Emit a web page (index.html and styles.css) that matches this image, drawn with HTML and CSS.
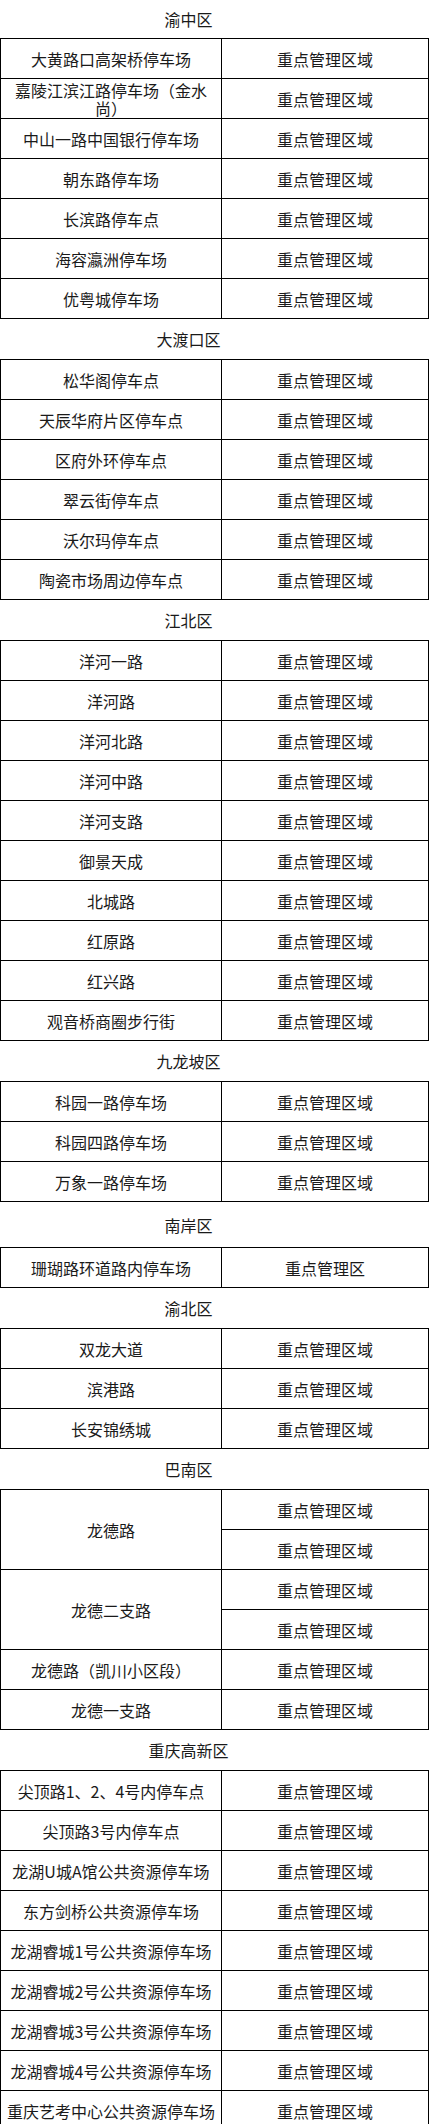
FILE: index.html
```html
<!DOCTYPE html>
<html lang="zh-CN">
<head>
<meta charset="utf-8">
<title>重点管理区域</title>
<link rel="stylesheet" href="styles.css">
</head>
<body>
<div class="page">
  <div class="district first">渝中区</div>
  <div class="grid">
    <div class="cell">大黄路口高架桥停车场</div><div class="cell">重点管理区域</div>
    <div class="cell">嘉陵江滨江路停车场（金水尚）</div><div class="cell">重点管理区域</div>
    <div class="cell">中山一路中国银行停车场</div><div class="cell">重点管理区域</div>
    <div class="cell">朝东路停车场</div><div class="cell">重点管理区域</div>
    <div class="cell">长滨路停车点</div><div class="cell">重点管理区域</div>
    <div class="cell">海容瀛洲停车场</div><div class="cell">重点管理区域</div>
    <div class="cell">优粤城停车场</div><div class="cell">重点管理区域</div>
  </div>

  <div class="district">大渡口区</div>
  <div class="grid">
    <div class="cell">松华阁停车点</div><div class="cell">重点管理区域</div>
    <div class="cell">天辰华府片区停车点</div><div class="cell">重点管理区域</div>
    <div class="cell">区府外环停车点</div><div class="cell">重点管理区域</div>
    <div class="cell">翠云街停车点</div><div class="cell">重点管理区域</div>
    <div class="cell">沃尔玛停车点</div><div class="cell">重点管理区域</div>
    <div class="cell">陶瓷市场周边停车点</div><div class="cell">重点管理区域</div>
  </div>

  <div class="district">江北区</div>
  <div class="grid">
    <div class="cell">洋河一路</div><div class="cell">重点管理区域</div>
    <div class="cell">洋河路</div><div class="cell">重点管理区域</div>
    <div class="cell">洋河北路</div><div class="cell">重点管理区域</div>
    <div class="cell">洋河中路</div><div class="cell">重点管理区域</div>
    <div class="cell">洋河支路</div><div class="cell">重点管理区域</div>
    <div class="cell">御景天成</div><div class="cell">重点管理区域</div>
    <div class="cell">北城路</div><div class="cell">重点管理区域</div>
    <div class="cell">红原路</div><div class="cell">重点管理区域</div>
    <div class="cell">红兴路</div><div class="cell">重点管理区域</div>
    <div class="cell">观音桥商圈步行街</div><div class="cell">重点管理区域</div>
  </div>

  <div class="district">九龙坡区</div>
  <div class="grid">
    <div class="cell">科园一路停车场</div><div class="cell">重点管理区域</div>
    <div class="cell">科园四路停车场</div><div class="cell">重点管理区域</div>
    <div class="cell">万象一路停车场</div><div class="cell">重点管理区域</div>
  </div>

  <div class="district tall">南岸区</div>
  <div class="grid">
    <div class="cell">珊瑚路环道路内停车场</div><div class="cell">重点管理区</div>
  </div>

  <div class="district">渝北区</div>
  <div class="grid">
    <div class="cell">双龙大道</div><div class="cell">重点管理区域</div>
    <div class="cell">滨港路</div><div class="cell">重点管理区域</div>
    <div class="cell">长安锦绣城</div><div class="cell">重点管理区域</div>
  </div>

  <div class="district">巴南区</div>
  <div class="grid">
    <div class="cell span2">龙德路</div><div class="cell">重点管理区域</div>
    <div class="cell">重点管理区域</div>
    <div class="cell span2">龙德二支路</div><div class="cell">重点管理区域</div>
    <div class="cell">重点管理区域</div>
    <div class="cell">龙德路（凯川小区段）</div><div class="cell">重点管理区域</div>
    <div class="cell">龙德一支路</div><div class="cell">重点管理区域</div>
  </div>

  <div class="district">重庆高新区</div>
  <div class="grid">
    <div class="cell">尖顶路1、2、4号内停车点</div><div class="cell">重点管理区域</div>
    <div class="cell">尖顶路3号内停车点</div><div class="cell">重点管理区域</div>
    <div class="cell">龙湖U城A馆公共资源停车场</div><div class="cell">重点管理区域</div>
    <div class="cell">东方剑桥公共资源停车场</div><div class="cell">重点管理区域</div>
    <div class="cell">龙湖睿城1号公共资源停车场</div><div class="cell">重点管理区域</div>
    <div class="cell">龙湖睿城2号公共资源停车场</div><div class="cell">重点管理区域</div>
    <div class="cell">龙湖睿城3号公共资源停车场</div><div class="cell">重点管理区域</div>
    <div class="cell">龙湖睿城4号公共资源停车场</div><div class="cell">重点管理区域</div>
    <div class="cell">重庆艺考中心公共资源停车场</div><div class="cell">重点管理区域</div>
  </div>
</div>
</body>
</html>
```

FILE: styles.css
```css
html, body {
  margin: 0;
  padding: 0;
  background: #fff;
}

.page {
  width: 429px;
  font-family: "Noto Sans CJK SC", "Noto Sans", sans-serif;
  font-size: 16px;
  color: #1a1a1a;
}

.district {
  height: 40px;
  display: flex;
  align-items: center;
  justify-content: center;
  padding-right: 52px;
  box-sizing: border-box;
  line-height: 18px;
}

.district.first {
  height: 38px;
}

.district.tall {
  height: 45px;
}

.grid {
  display: grid;
  grid-template-columns: 220px 206px;
  grid-auto-rows: 39px;
  gap: 1px;
  padding: 1px;
  background: #000;
}

.cell {
  background: #fff;
  display: flex;
  align-items: center;
  justify-content: center;
  text-align: center;
  padding: 0 4px;
  line-height: 18px;
  min-width: 0;
}

.cell.span2 {
  grid-row: span 2;
}
```
